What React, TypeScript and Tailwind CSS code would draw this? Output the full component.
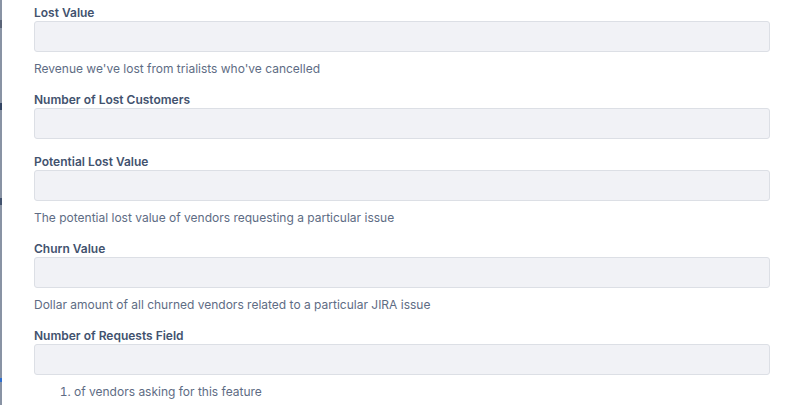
import React from 'react';

type Field = {
  label: string;
  help?: string;
  list?: boolean;
};

const fields: Field[] = [
  { label: 'Lost Value', help: "Revenue we've lost from trialists who've cancelled" },
  { label: 'Number of Lost Customers' },
  { label: 'Potential Lost Value', help: 'The potential lost value of vendors requesting a particular issue' },
  { label: 'Churn Value', help: 'Dollar amount of all churned vendors related to a particular JIRA issue' },
  { label: 'Number of Requests Field', help: 'of vendors asking for this feature', list: true },
];

function FieldRow({ field }: { field: Field }) {
  return (
    <div className="flex flex-col">
      <label className="text-[12px] leading-[18px] font-semibold text-[#42526e]">{field.label}</label>
      <input
        type="text"
        className="-mt-[1px] h-[31px] w-full rounded-[3px] border border-[#dcdfe5] bg-[#f1f2f6] px-2 text-sm text-[#172b4d] focus:outline-none"
      />
      {field.help && !field.list && (
        <p className="mt-[8px] text-[12px] leading-[17px] text-[#5e6c84]">{field.help}</p>
      )}
      {field.help && field.list && (
        <ol className="mt-[8px] list-decimal pl-10 text-[12px] leading-[17px] text-[#5e6c84]">
          <li>{field.help}</li>
        </ol>
      )}
    </div>
  );
}

export default function App() {
  return (
    <div className="flex h-[405px] w-[797px] overflow-hidden bg-white" style={{ fontFamily: 'Inter, "Noto Sans", sans-serif' }}>
      <div className="relative w-[2px] shrink-0 bg-[#8993a4]">
        <span className="absolute left-0 top-[20px] h-[8px] w-[2px] bg-[#5a6478]" />
        <span className="absolute left-0 top-[103px] h-[7px] w-[2px] bg-[#344563]" />
        <span className="absolute left-0 top-[198px] h-[7px] w-[2px] bg-[#42526e]" />
        <span className="absolute left-0 top-[378px] h-[4px] w-[2px] bg-[#2d6fd1]" />
      </div>
      <div className="flex flex-1 flex-col gap-[14px] pl-[32px] pr-[27px] pt-[4px]">
        {fields.map((f) => (
          <FieldRow key={f.label} field={f} />
        ))}
      </div>
    </div>
  );
}
